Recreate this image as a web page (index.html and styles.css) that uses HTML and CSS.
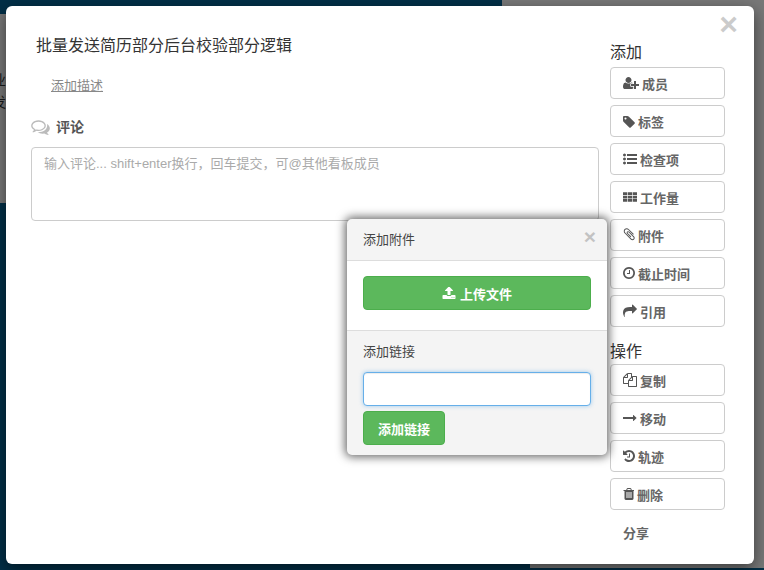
FILE: index.html
```html
<!DOCTYPE html>
<html lang="zh">
<head>
<meta charset="utf-8">
<title>批量发送简历部分后台校验部分逻辑</title>
<link rel="stylesheet" href="styles.css">
</head>
<body>
<div class="board">
  <div class="panel panel-left"><span class="hint">业</span><span class="hint">发</span></div>
  <div class="panel panel-top"></div>
  <div class="panel panel-right"></div>
  <div class="panel panel-bottom"></div>
</div>
<div class="backdrop"></div>
<div class="modal">
  <span class="close close-main">×</span>
  <div class="main">
    <h1 class="title">批量发送简历部分后台校验部分逻辑</h1>
    <a class="desc">添加描述</a>
    <div class="comment-head">
      <svg class="ico-comments" viewBox="0 128 1792 1536"><path d="M704 384q-153 0-286 52t-211.500 141-78.500 191q0 82 53 158t149 132l97 56-35 84q34-20 62-39l44-31 53 10q78 14 153 14 153 0 286-52t211.500-141 78.500-191-78.500-191-211.500-141-286-52zm0-128q191 0 353.500 68.500t256.500 186.500 94 257-94 257-256.500 186.500-353.500 68.500q-86 0-176-16-124 88-278 128-36 9-86 16h-3q-11 0-20.500-8t-11.500-21q-1-3-1-6.500t.5-6.500 2-6l2.500-5 3.500-5.500 4-5 4.500-5 4-4.500q5-6 23-25t26-29.500 22.500-29 25-38.500 20.500-44q-124-72-195-177t-71-224q0-139 94-257t256.500-186.500 353.500-68.500zm822 1169q5 14 20.500 44t25 38.500 22.500 29 26 29.500 23 25q1 1 4 4.500t4.500 5 4 5 3.500 5.500l2.500 5 2 6 .5 6.500-1 6.500q-3 14-13 22t-22 7q-50-7-86-16-154-40-278-128-90 16-176 16-271 0-472-132 58 4 88 4 161 0 309-45t264-129q125-92 192-212t67-254q0-77-23-152 129 71 204 178t75 230q0 120-71 224.500t-195 176.500z"/></svg>
      <span>评论</span>
    </div>
    <textarea class="comment-box" placeholder="输入评论... shift+enter换行，回车提交，可@其他看板成员"></textarea>
  </div>
  <aside class="side">
    <h2 class="side-title">添加</h2>
    <button class="btn"><svg class="ico" viewBox="0 0 2048 1792"><path d="M704 896q-159 0-271.500-112.500t-112.500-271.500 112.500-271.500 271.500-112.500 271.500 112.500 112.500 271.500-112.500 271.500-271.500 112.500zm960 128h352q13 0 22.500 9.500t9.500 22.500v192q0 13-9.500 22.500t-22.500 9.500h-352v352q0 13-9.500 22.500t-22.500 9.500h-192q-13 0-22.500-9.500t-9.500-22.500v-352h-352q-13 0-22.500-9.500t-9.500-22.500v-192q0-13 9.500-22.500t22.500-9.500h352v-352q0-13 9.500-22.500t22.500-9.500h192q13 0 22.500 9.500t9.500 22.500v352zm-736 224q0 52 38 90t90 38h256v238q-68 50-171 50h-874q-121 0-194-69t-73-190q0-53 3.500-103.500t14-109 26.500-108.500 43-97.500 62-81 85.500-53.500 111.500-20q19 0 39 17 79 61 154.500 91.500t164.500 30.500 164.500-30.500 154.500-91.500q20-17 39-17 132 0 217 96h-223q-52 0-90 38t-38 90v192z"/></svg>成员</button>
    <button class="btn"><svg class="ico" viewBox="0 0 1536 1792"><path d="M448 576q0-53-37.500-90.500t-90.500-37.500-90.500 37.500-37.500 90.500 37.500 90.500 90.500 37.500 90.500-37.500 37.500-90.500zm1067 576q0 53-37 90l-491 492q-39 37-91 37-53 0-90-37l-715-716q-38-37-64.500-101t-26.500-117v-416q0-52 38-90t90-38h416q53 0 117 26.500t102 64.500l715 714q37 39 37 91z"/></svg>标签</button>
    <button class="btn"><svg class="ico" viewBox="0 0 1792 1792"><path d="M384 1408q0 80-56 136t-136 56-136-56-56-136 56-136 136-56 136 56 56 136zm0-512q0 80-56 136t-136 56-136-56-56-136 56-136 136-56 136 56 56 136zm1408 416v192q0 13-9.500 22.500t-22.500 9.500h-1216q-13 0-22.500-9.500t-9.500-22.500v-192q0-13 9.500-22.500t22.500-9.500h1216q13 0 22.500 9.500t9.500 22.500zm-1408-928q0 80-56 136t-136 56-136-56-56-136 56-136 136-56 136 56 56 136zm1408 416v192q0 13-9.500 22.500t-22.500 9.500h-1216q-13 0-22.500-9.500t-9.500-22.500v-192q0-13 9.500-22.500t22.500-9.500h1216q13 0 22.500 9.500t9.500 22.500zm0-512v192q0 13-9.500 22.500t-22.500 9.500h-1216q-13 0-22.500-9.500t-9.500-22.500v-192q0-13 9.500-22.500t22.500-9.500h1216q13 0 22.500 9.500t9.500 22.500z"/></svg>检查项</button>
    <button class="btn"><svg class="ico" viewBox="0 0 1792 1792"><path d="M0 288h544v352H0zM624 288h544v352H624zM1248 288h544v352h-544zM0 720h544v352H0zM624 720h544v352H624zM1248 720h544v352h-544zM0 1152h544v352H0zM624 1152h544v352H624zM1248 1152h544v352h-544z"/></svg>工作量</button>
    <button class="btn"><svg class="ico" viewBox="100 100 1520 1792"><path d="M1596 1385q0 117-79 196t-196 79q-135 0-235-100l-777-776q-113-115-113-271 0-159 110-270t269-111q158 0 273 113l605 606q10 10 10 22 0 16-30.500 46.500t-46.500 30.500q-13 0-23-10l-606-607q-79-77-181-77-106 0-179 75t-73 181q0 105 76 181l776 777q63 63 145 63 64 0 106-42t42-106q0-82-63-145l-581-581q-26-24-60-24-29 0-48 19t-19 48q0 32 25 59l410 410q10 10 10 22 0 16-31 47t-47 31q-12 0-22-10l-410-410q-63-61-63-149 0-82 57-139t139-57q88 0 149 63l581 581q100 98 100 235z"/></svg>附件</button>
    <button class="btn"><svg class="ico" viewBox="128 0 1536 1792"><path d="M1024 544v448q0 14-9 23t-23 9h-320q-14 0-23-9t-9-23v-64q0-14 9-23t23-9h224v-352q0-14 9-23t23-9h64q14 0 23 9t9 23zm416 352q0-148-73-273t-198-198-273-73-273 73-198 198-73 273 73 273 198 198 273 73 273-73 198-198 73-273zm224 0q0 209-103 385.500t-279.500 279.500-385.500 103-385.500-103-279.500-279.500-103-385.500 103-385.500 279.500-279.500 385.500-103 385.500 103 279.500 279.500 103 385.500z"/></svg>截止时间</button>
    <button class="btn"><svg class="ico" viewBox="0 0 1792 1792"><path d="M1792 640q0 26-19 45l-512 512q-19 19-45 19t-45-19-19-45v-256h-224q-98 0-175.500 6t-154 21.500-133 42.500-105.500 69.500-80 101-48.500 138.500-17.500 181q0 55 5 123 0 6 2.500 23.500t2.500 26.500q0 15-8.500 25t-23.500 10q-16 0-28-17-7-9-13-22t-13.500-30-10.500-24q-127-285-127-451 0-199 53-333 162-403 875-403h224v-256q0-26 19-45t45-19 45 19l512 512q19 19 19 45z"/></svg>引用</button>
    <h2 class="side-title side-title-ops">操作</h2>
    <button class="btn"><svg class="ico" viewBox="0 0 1792 1792"><path d="M1696 384q40 0 68 28t28 68v1216q0 40-28 68t-68 28h-960q-40 0-68-28t-28-68v-288h-544q-40 0-68-28t-28-68v-672q0-40 20-88t48-76l408-408q28-28 76-48t88-20h416q40 0 68 28t28 68v328q68-40 128-40h416zm-544 213l-299 299h299v-299zm-640-384l-299 299h299v-299zm196 647l316-316v-416h-384v416q0 40-28 68t-68 28h-416v640h512v-256q0-40 20-88t48-76zm956 804v-1152h-384v416q0 40-28 68t-68 28h-416v640h896z"/></svg>复制</button>
    <button class="btn"><svg class="ico" viewBox="0 0 1792 1792"><path d="M1728 893q0 14-10 24l-384 354q-16 14-35 6-19-9-19-29v-224h-1248q-14 0-23-9t-9-23v-192q0-14 9-23t23-9h1248v-224q0-21 19-29t35 5l384 350q10 10 10 23z"/></svg>移动</button>
    <button class="btn"><svg class="ico" viewBox="128 0 1536 1792"><path d="M1664 896q0 156-61 298t-164 245-245 164-298 61q-172 0-327-72.500t-264-204.500q-7-10-6.500-22.500t8.500-20.500l137-138q10-9 25-9 16 2 23 12 73 95 179 147t225 52q104 0 198.500-40.500t163.500-109.500 109.500-163.500 40.500-198.500-40.500-198.500-109.500-163.500-163.500-109.500-198.500-40.500q-98 0-188 35.500t-160 101.500l137 138q31 30 14 69-17 40-59 40h-448q-26 0-45-19t-19-45v-448q0-42 40-59 39-17 69 14l130 129q107-101 244.500-156.500t284.500-55.500q156 0 298 61t245 164 164 245 61 298zm-640-288v448q0 14-9 23t-23 9h-320q-14 0-23-9t-9-23v-64q0-14 9-23t23-9h224v-352q0-14 9-23t23-9h64q14 0 23 9t9 23z"/></svg>轨迹</button>
    <button class="btn"><svg class="ico" viewBox="128 0 1408 1792"><path d="M704 1376v-704q0-14-9-23t-23-9h-64q-14 0-23 9t-9 23v704q0 14 9 23t23 9h64q14 0 23-9t9-23zm256 0v-704q0-14-9-23t-23-9h-64q-14 0-23 9t-9 23v704q0 14 9 23t23 9h64q14 0 23-9t9-23zm256 0v-704q0-14-9-23t-23-9h-64q-14 0-23 9t-9 23v704q0 14 9 23t23 9h64q14 0 23-9t9-23zm-544-992h448l-48-117q-7-9-17-11h-317q-10 2-17 11zm928 32v64q0 14-9 23t-23 9h-96v948q0 83-47 143.500t-113 60.500h-832q-66 0-113-58.500t-47-141.500v-952h-96q-14 0-23-9t-9-23v-64q0-14 9-23t23-9h309l70-167q15-37 54-63t79-26h320q40 0 79 26t54 63l70 167h309q14 0 23 9t9 23z"/></svg>删除</button>
    <button class="btn btn-plain">分享</button>
  </aside>
  <div class="popover">
    <div class="pop-head">
      <span>添加附件</span>
      <span class="close close-pop">×</span>
    </div>
    <div class="pop-upload">
      <button class="btn-green btn-block"><svg class="ico-up" viewBox="0 128 1792 1536"><path d="M1344 1472q0-26-19-45t-45-19-45 19-19 45 19 45 45 19 45-19 19-45zm256 0q0-26-19-45t-45-19-45 19-19 45 19 45 45 19 45-19 19-45zm128-224v320q0 40-28 68t-68 28h-1472q-40 0-68-28t-28-68v-320q0-40 28-68t68-28h427q21 56 70.500 92t110.500 36h256q61 0 110.500-36t70.500-92h427q40 0 68 28t28 68zm-325-648q-17 40-59 40h-256v448q0 26-19 45t-45 19h-256q-26 0-45-19t-19-45v-448h-256q-42 0-59-40-17-39 14-69l448-448q18-19 45-19t45 19l448 448q31 30 14 69z"/></svg>上传文件</button>
    </div>
    <div class="pop-link">
      <label class="pop-label" for="link">添加链接</label>
      <input class="pop-input" id="link" type="text">
      <button class="btn-green btn-add">添加链接</button>
    </div>
  </div>
</div>
</body>
</html>
```
FILE: styles.css
```css
* { box-sizing: border-box; }
html, body { margin: 0; height: 100%; overflow: hidden; }
body {
  background: #045f8e;
  font-family: "Liberation Sans", "Noto Sans CJK SC", sans-serif;
  font-size: 13px;
  color: #333;
  position: relative;
  padding: 6px 10px 6px 6px;
}
.board { position: absolute; inset: 0; }
.panel { position: absolute; background: #f0f0f0; }
.panel-left { left: 0; top: 14px; width: 40px; height: 189px; display: flex; flex-direction: column; padding-top: 58px; gap: 6px; }
.hint { font-size: 14px; line-height: 16px; margin-left: -8px; color: #333; }
.panel-top { left: 502px; top: 0; right: 0; height: 30px; }
.panel-right { left: 700px; top: 0; right: 0; bottom: 2px; }
.panel-bottom { left: 530px; right: 0; bottom: 2px; height: 60px; }
.backdrop { position: absolute; inset: 0; background: rgba(0, 0, 0, .5); }

.modal {
  position: relative;
  width: 748px;
  height: 558px;
  background: #fff;
  border-radius: 6px;
  box-shadow: 0 5px 15px rgba(0, 0, 0, .5);
  display: flex;
}
.close {
  position: absolute;
  font-weight: bold;
  color: #000;
  opacity: .2;
  line-height: 1;
}
.close-main { right: 16px; top: 2px; font-size: 32px; }
.main { width: 604px; padding: 30px 11px 0 25px; display: flex; flex-direction: column; }
.title { margin: 0 0 0 5px; font-size: 16px; font-weight: normal; line-height: 20px; color: #333; }
.desc { margin: 21px 0 0 20px; font-size: 13px; line-height: 18px; color: #888; text-decoration: underline; align-self: flex-start; }
.comment-head { margin-top: 22px; display: flex; align-items: center; gap: 6px; font-size: 14px; font-weight: bold; color: #555; line-height: 20px; }
.ico-comments { width: 19px; height: 16px; fill: #bbb; }
.comment-box {
  margin-top: 10px;
  width: 568px;
  height: 74px;
  border: 1px solid #ccc;
  border-radius: 4px;
  padding: 6px 12px;
  font: inherit;
  line-height: 20px;
  resize: none;
  outline: none;
}
.comment-box::placeholder { color: #aaa; opacity: 1; }

.side { width: 115px; padding-top: 37px; display: flex; flex-direction: column; gap: 6px; margin-left: 0; }
.side-title { margin: 0 0 -6px; height: 24px; font-size: 16px; font-weight: normal; line-height: 20px; color: #333; }
.side-title-ops { margin-top: 6px; margin-bottom: -5px; line-height: 26px; }
.btn {
  height: 32px;
  flex: none;
  background: #fff;
  border: 1px solid #ccc;
  border-radius: 4px;
  padding: 0 0 0 12px;
  font: inherit;
  font-weight: bold;
  color: #666;
  display: flex;
  align-items: center;
  gap: 3px;
  text-align: left;
}
.btn-plain { border-color: transparent; margin-top: 0; }
.ico { height: 14px; width: auto; fill: #555; flex: none; }

.popover {
  position: absolute;
  left: 341px;
  top: 213px;
  width: 260px;
  height: 236px;
  background: #f4f4f4;
  border-radius: 5px;
  box-shadow: 0 0 10px 2px rgba(0, 0, 0, .6);
  font-size: 13px;
  display: flex;
  flex-direction: column;
}
.pop-head { position: relative; height: 42px; padding: 12px 16px 0; line-height: 18px; color: #444; border-bottom: 1px solid #ddd; flex: none; }
.close-pop { right: 11px; top: 7px; font-size: 21px; }
.pop-upload { height: 70px; flex: none; background: #fff; border-bottom: 1px solid #ddd; padding: 15px 16px 0; }
.btn-green {
  background: #5cb85c;
  border: 1px solid #4cae4c;
  border-radius: 4px;
  color: #fff;
  font: inherit;
  font-weight: bold;
  height: 34px;
}
.btn-block { width: 228px; display: flex; align-items: center; justify-content: center; gap: 4px; padding: 0; }
.ico-up { width: 14px; height: 12px; fill: #fff; }
.pop-link { padding: 12px 16px 0; display: flex; flex-direction: column; align-items: flex-start; }
.pop-label { line-height: 18px; color: #444; }
.pop-input {
  margin-top: 11px;
  width: 228px;
  height: 34px;
  border: 1px solid #66afe9;
  border-radius: 4px;
  background: #fff;
  outline: none;
  box-shadow: inset 0 1px 1px rgba(0, 0, 0, .075), 0 0 4px rgba(102, 175, 233, .6);
}
.btn-add { margin-top: 5px; width: 82px; padding: 0; }
```
